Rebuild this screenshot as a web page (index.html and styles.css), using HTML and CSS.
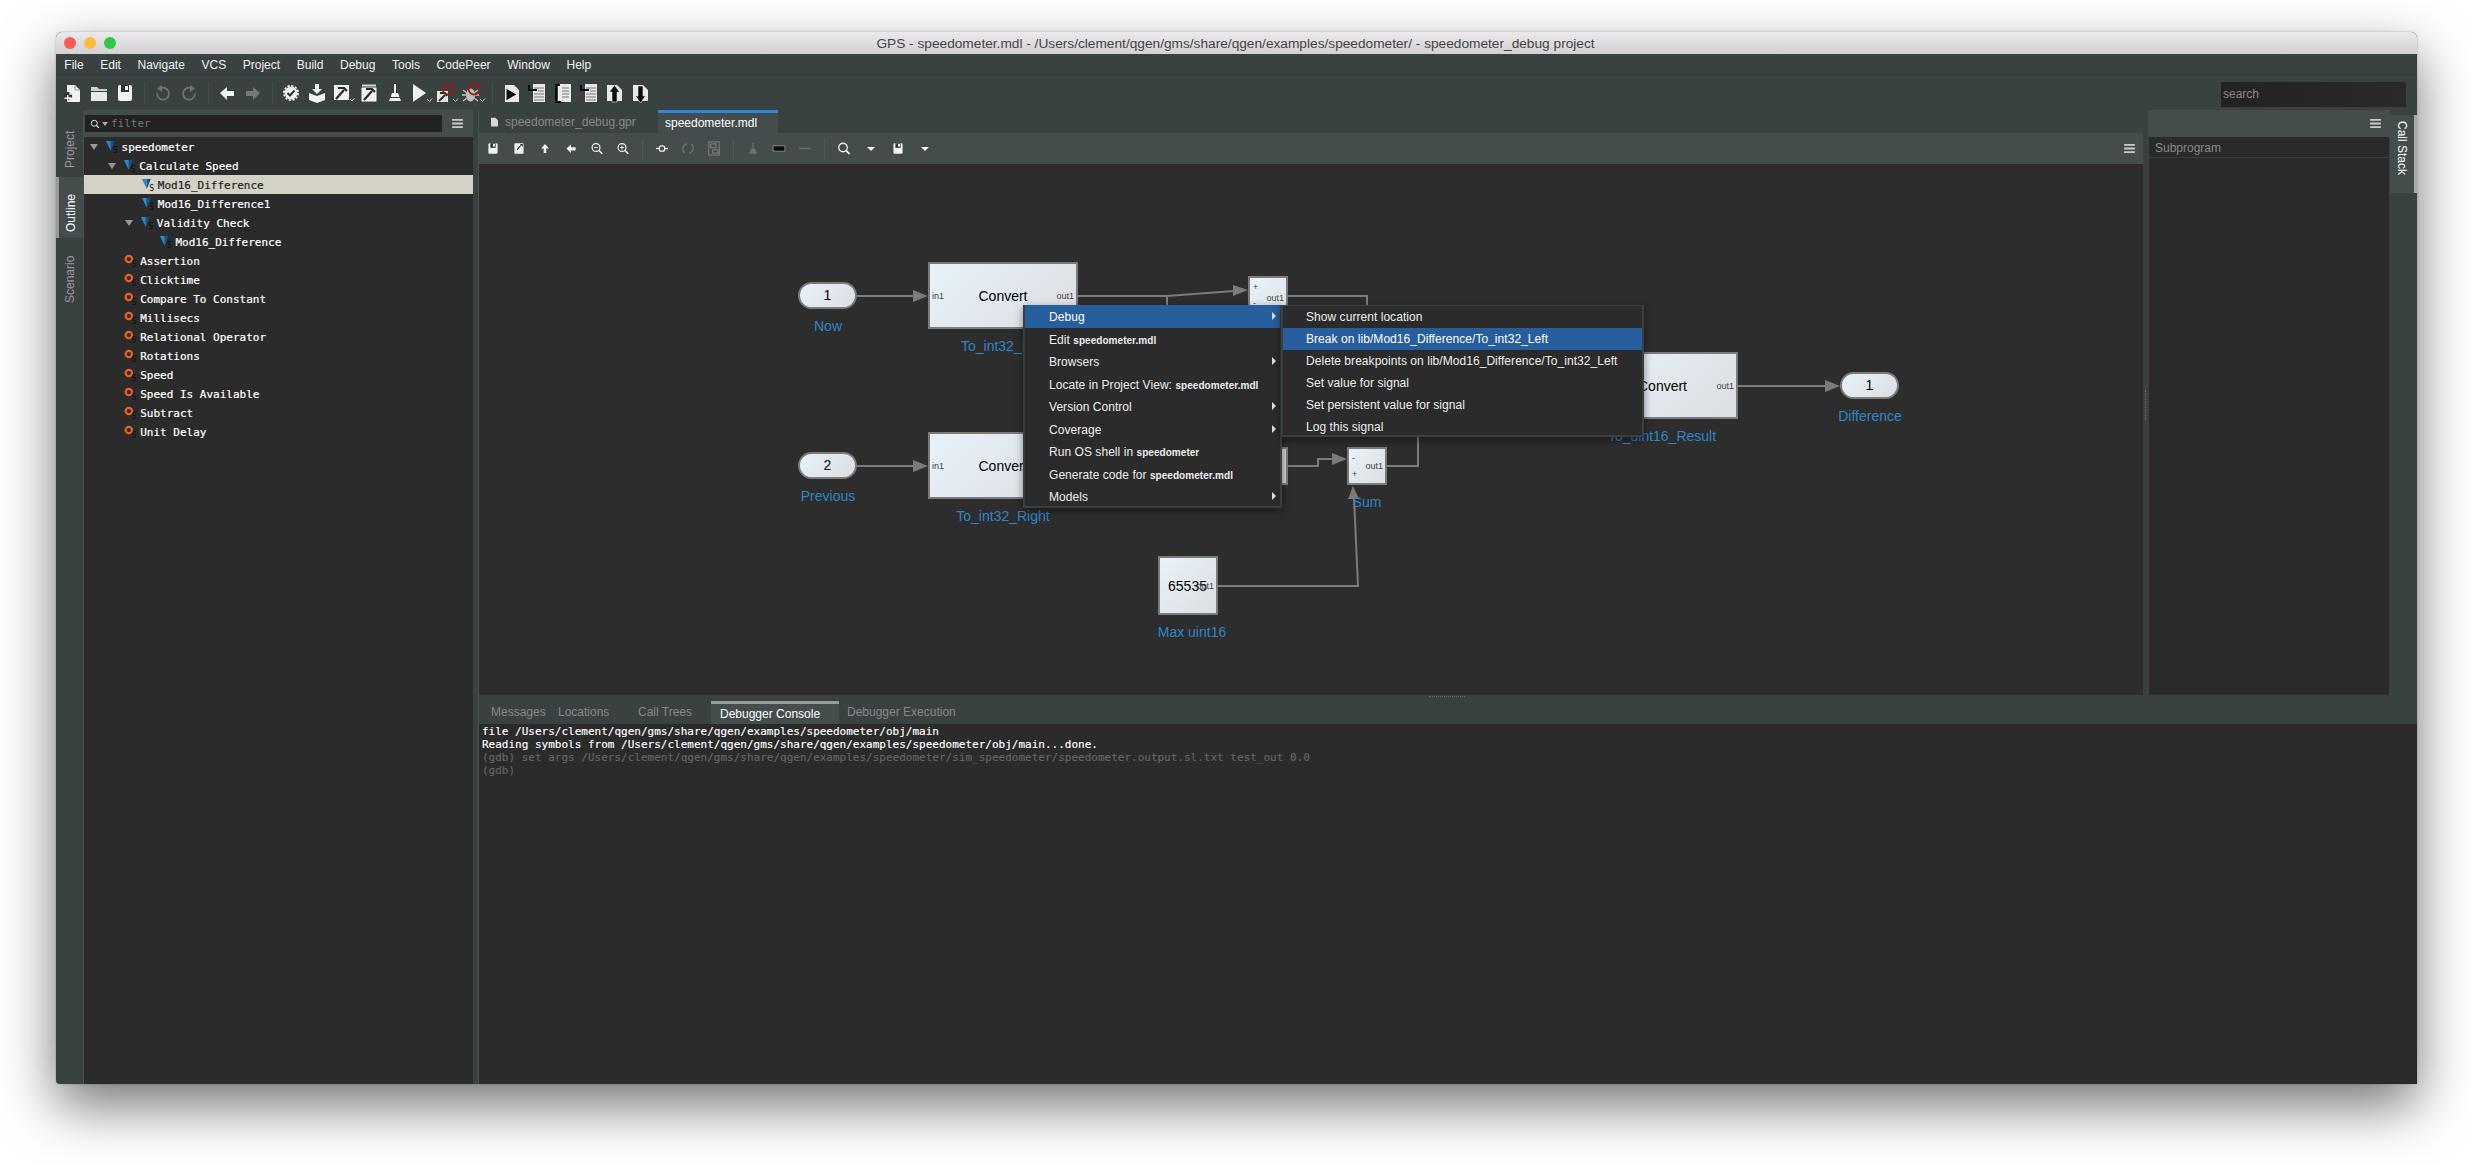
FILE: index.html
```html
<!DOCTYPE html>
<html lang="en">
<head>
  <meta charset="UTF-8">
  <title>GPS - speedometer.mdl</title>
  <link rel="stylesheet" href="styles.css">
</head>
<body>

  <!-- Icon set -->
  <svg class="defs" width="0" height="0">
    <symbol id="i-new" viewBox="0 0 26 26">
      <path d="M7 5h8l5 5v11a1 1 0 0 1-1 1H7z" fill="#f2f2f2"/>
      <path d="M15 5v5h5" fill="none" stroke="#9a9f9e"/>
      <path d="M8 14v3h3v3H8v3H5v-3H2v-3h3v-3z" fill="#2b2f2f" transform="translate(2 -1) scale(.92)"/>
      <path d="M7 15h1.500v2.500H11V19H8.500v2.500H7V19H4.500v-1.500H7z" fill="#fff"/>
    </symbol>
    <symbol id="i-open" viewBox="0 0 26 26">
      <path d="M5 7h6l2 2h8v2H5z" fill="#cfd1d0"/>
      <path d="M5 12h16v9H5z" fill="#e9e9e9"/>
    </symbol>
    <symbol id="i-save" viewBox="0 0 26 26">
      <rect x="6" y="5" width="14" height="16" rx="2" fill="#f2f2f2"/>
      <rect x="9" y="5" width="8" height="7" fill="#2f3535"/>
      <rect x="13" y="6" width="3" height="4" fill="#f2f2f2"/>
    </symbol>
    <symbol id="i-saveas" viewBox="0 0 26 26">
      <rect x="6" y="5" width="14" height="16" rx="1" fill="#f2f2f2"/>
      <path d="M10 15l6-7M15 7h3v3" fill="none" stroke="#2f3535" stroke-width="1.600"/>
    </symbol>
    <symbol id="i-undo" viewBox="0 0 26 26">
      <path d="M10 8.500a6 6 0 1 1-3 5" fill="none" stroke="#6d7473" stroke-width="1.800"/>
      <path d="M12 5v7l-5-3.500z" fill="#6d7473"/>
    </symbol>
    <symbol id="i-redo" viewBox="0 0 26 26">
      <path d="M16 8.500a6 6 0 1 0 3 5" fill="none" stroke="#6d7473" stroke-width="1.800"/>
      <path d="M14 5v7l5-3.500z" fill="#6d7473"/>
    </symbol>
    <symbol id="i-back" viewBox="0 0 26 26">
      <path d="M6 13l7-6v4h7v5h-7v4z" fill="#f2f2f2"/>
    </symbol>
    <symbol id="i-fwd" viewBox="0 0 26 26">
      <path d="M20 13l-7-6v4H6v5h7v4z" fill="#737a79"/>
    </symbol>
    <symbol id="i-up" viewBox="0 0 26 26">
      <path d="M13 6l6 7h-4v7h-4v-7H7z" fill="#f2f2f2"/>
    </symbol>
    <symbol id="i-check" viewBox="0 0 26 26">
      <circle cx="13" cy="13" r="6.500" fill="#f2f2f2"/>
      <circle cx="13" cy="13" r="7.200" fill="none" stroke="#f2f2f2" stroke-width="1.600" stroke-dasharray="2.300 1.470"/>
      <path d="M9.500 13l2.500 2.500 4.500-5" fill="none" stroke="#2f3535" stroke-width="2"/>
    </symbol>
    <symbol id="i-load" viewBox="0 0 26 26">
      <path d="M5 13l8 3 8-3v7l-8 3-8-3z" fill="#f2f2f2"/>
      <path d="M11 4h4v5h3l-5 5-5-5h3z" fill="#f2f2f2"/>
    </symbol>
    <symbol id="i-build" viewBox="0 0 26 26">
      <rect x="4" y="5" width="15" height="15" fill="#f2f2f2"/>
      <path d="M6 19l8-9M8 8h6l3 3" fill="none" stroke="#262a2a" stroke-width="2.200"/>
      <path d="M20 19l2 2 2.500-3" fill="none" stroke="#c4c8c7"/>
    </symbol>
    <symbol id="i-build2" viewBox="0 0 26 26">
      <rect x="6" y="4.500" width="14" height="2" fill="#d8d8d8"/>
      <rect x="5.500" y="7.500" width="15" height="14" fill="#f2f2f2"/>
      <path d="M8 20l8-9M10 9h6l3 3" fill="none" stroke="#262a2a" stroke-width="2.200"/>
    </symbol>
    <symbol id="i-broom" viewBox="0 0 26 26">
      <rect x="12" y="4" width="2" height="9" fill="#f2f2f2"/>
      <path d="M10 13h6l3 8H7z" fill="#f2f2f2"/>
      <path d="M7 17.500h12" stroke="#3a4241"/>
    </symbol>
    <symbol id="i-broom-off" viewBox="0 0 26 26">
      <rect x="12" y="5" width="2" height="8" fill="#6a7170"/>
      <path d="M10 13h6l3 8H7z" fill="#6a7170"/>
    </symbol>
    <symbol id="i-run" viewBox="0 0 26 26">
      <path d="M5 4l13 9-13 9z" fill="#f2f2f2"/>
      <path d="M19 19l2.500 2.500 2.500-3" fill="none" stroke="#c4c8c7"/>
    </symbol>
    <symbol id="i-buildred" viewBox="0 0 26 26">
      <rect x="3" y="11" width="11" height="11" fill="#e4e4e4"/>
      <path d="M5 21l6-6M6 13h5l2 3" fill="none" stroke="#262a2a" stroke-width="1.800"/>
      <circle cx="14" cy="9" r="5.500" fill="none" stroke="#a01818" stroke-width="1.800"/>
      <path d="M19 19l2.500 2.500 2.500-3" fill="none" stroke="#c4c8c7"/>
    </symbol>
    <symbol id="i-debug" viewBox="0 0 26 26">
      <ellipse cx="10.500" cy="15" rx="4.500" ry="6.500" fill="#bfc1c0"/>
      <path d="M3 10l4 3M2 15h4M3 21l4-3M18 10l-4 3M19 15h-4M18 21l-4-3" stroke="#bfc1c0" stroke-width="1.300"/>
      <circle cx="14" cy="9" r="5.500" fill="none" stroke="#a01818" stroke-width="1.800"/>
      <path d="M20 19l2.500 2.500 2.500-3" fill="none" stroke="#c4c8c7"/>
    </symbol>
    <symbol id="i-step" viewBox="0 0 26 26">
      <path d="M7 5h9l5 5v12H7z" fill="#e9e9e9"/>
      <path d="M8 8l11 6.500L8 21z" fill="#0b0b0b" stroke="#e9e9e9"/>
    </symbol>
    <symbol id="i-stepin" viewBox="0 0 26 26">
      <rect x="9" y="4" width="12" height="18" fill="#e9e9e9"/>
      <path d="M10 8h10M14 11h6M10 14h10M10 17h10M10 20h10" stroke="#777" stroke-width="1.100"/>
      <path d="M5 5v5h8" fill="none" stroke="#0b0b0b" stroke-width="2"/>
    </symbol>
    <symbol id="i-stepover" viewBox="0 0 26 26">
      <rect x="8" y="4" width="13" height="18" fill="#e9e9e9"/>
      <path d="M12 8h7M12 11h7M12 14h7M12 17h7" stroke="#777" stroke-width="1.100"/>
      <path d="M10 5H6v17h5" fill="none" stroke="#0b0b0b" stroke-width="2"/>
    </symbol>
    <symbol id="i-stepup" viewBox="0 0 26 26">
      <path d="M5 5h10l5 5v11H5z" fill="#e9e9e9"/>
      <path d="M12.500 5l5 7H15v10h-5V12H7.500z" fill="#0b0b0b" stroke="#e9e9e9" stroke-width=".6"/>
    </symbol>
    <symbol id="i-stepdown" viewBox="0 0 26 26">
      <path d="M5 5h10l5 5v11H5z" fill="#e9e9e9"/>
      <path d="M12.500 23l5-7H15V6h-5v10H7.500z" fill="#0b0b0b" stroke="#e9e9e9" stroke-width=".6"/>
    </symbol>
    <symbol id="i-zoomout" viewBox="0 0 26 26">
      <circle cx="11.500" cy="11.500" r="6" fill="none" stroke="#f2f2f2" stroke-width="1.800"/>
      <path d="M16 16l5 5" stroke="#f2f2f2" stroke-width="2.400"/>
      <path d="M8.500 11.500h6" stroke="#f2f2f2" stroke-width="1.400"/>
    </symbol>
    <symbol id="i-zoomin" viewBox="0 0 26 26">
      <circle cx="11.500" cy="11.500" r="6" fill="none" stroke="#f2f2f2" stroke-width="1.800"/>
      <path d="M16 16l5 5" stroke="#f2f2f2" stroke-width="2.400"/>
      <path d="M8.500 11.500h6M11.500 8.500v6" stroke="#f2f2f2" stroke-width="1.400"/>
    </symbol>
    <symbol id="i-search" viewBox="0 0 26 26">
      <circle cx="11.500" cy="11.500" r="6.500" fill="none" stroke="#f2f2f2" stroke-width="2"/>
      <path d="M16 16l5.500 5.500" stroke="#f2f2f2" stroke-width="2.600"/>
    </symbol>
    <symbol id="i-link" viewBox="0 0 26 26">
      <path d="M4 13h18" stroke="#f2f2f2" stroke-width="2"/>
      <rect x="9" y="9" width="8" height="8" rx="3" fill="#454d4c" stroke="#f2f2f2" stroke-width="2"/>
    </symbol>
    <symbol id="i-sync" viewBox="0 0 26 26">
      <path d="M8 20a8 8 0 0 1 3-14M18 6a8 8 0 0 1-3 14" fill="none" stroke="#6d7473" stroke-width="2"/>
    </symbol>
    <symbol id="i-layout" viewBox="0 0 26 26">
      <rect x="5" y="3" width="16" height="20" fill="none" stroke="#80868a" stroke-width="1.400"/>
      <rect x="8" y="6" width="8" height="6" fill="none" stroke="#80868a" stroke-width="1.400"/>
      <rect x="11" y="15" width="8" height="5" fill="none" stroke="#80868a" stroke-width="1.400"/>
    </symbol>
    <symbol id="i-rect" viewBox="0 0 26 26">
      <rect x="4" y="9" width="18" height="8" fill="#0c0c0c" stroke="#a8a8a8"/>
    </symbol>
    <symbol id="i-minus" viewBox="0 0 26 26">
      <rect x="4" y="12" width="18" height="2" fill="#666d6c"/>
    </symbol>
    <symbol id="i-caret" viewBox="0 0 26 26">
      <path d="M5 10h16l-8 8z" fill="#f2f2f2"/>
    </symbol>
    <symbol id="i-menu" viewBox="0 0 12 10">
      <path d="M0 0h12v2H0zM0 4h12v2H0zM0 8h12v2H0z" fill="#c9cccb"/>
    </symbol>
    <symbol id="i-diagram" viewBox="0 0 20 16">
      <path d="M4 2h5v10z" fill="#2f86c8"/>
      <path d="M9 2h4l-4 10z" fill="#174f86"/>
    </symbol>
    <symbol id="i-block" viewBox="0 0 20 16">
      <circle cx="8" cy="6" r="3.300" fill="none" stroke="#ee6020" stroke-width="2.200"/>
    </symbol>
  </svg>

  <div class="window">
    <div class="titlebar">
      <span class="light light-red"></span>
      <span class="light light-yellow"></span>
      <span class="light light-green"></span>
      <span class="title">GPS - speedometer.mdl - /Users/clement/qgen/gms/share/qgen/examples/speedometer/ - speedometer_debug project</span>
    </div>

    <div class="menubar">
      <span>File</span><span>Edit</span><span>Navigate</span><span>VCS</span><span>Project</span><span>Build</span>
      <span>Debug</span><span>Tools</span><span>CodePeer</span><span>Window</span><span>Help</span>
    </div>

    <div class="toolbar">
      <svg class="tool"><use href="#i-new"/></svg>
      <svg class="tool"><use href="#i-open"/></svg>
      <svg class="tool"><use href="#i-save"/></svg>
      <span class="sep"></span>
      <svg class="tool"><use href="#i-undo"/></svg>
      <svg class="tool"><use href="#i-redo"/></svg>
      <span class="sep"></span>
      <svg class="tool"><use href="#i-back"/></svg>
      <svg class="tool"><use href="#i-fwd"/></svg>
      <span class="sep"></span>
      <svg class="tool"><use href="#i-check"/></svg>
      <svg class="tool"><use href="#i-load"/></svg>
      <svg class="tool"><use href="#i-build"/></svg>
      <svg class="tool"><use href="#i-build2"/></svg>
      <svg class="tool"><use href="#i-broom"/></svg>
      <svg class="tool"><use href="#i-run"/></svg>
      <svg class="tool"><use href="#i-buildred"/></svg>
      <svg class="tool"><use href="#i-debug"/></svg>
      <span class="sep"></span>
      <svg class="tool"><use href="#i-step"/></svg>
      <svg class="tool"><use href="#i-stepin"/></svg>
      <svg class="tool"><use href="#i-stepover"/></svg>
      <svg class="tool"><use href="#i-stepin"/></svg>
      <svg class="tool"><use href="#i-stepup"/></svg>
      <svg class="tool"><use href="#i-stepdown"/></svg>
      <div class="search">search</div>
    </div>

    <div class="workspace">
      <!-- Left vertical tabs -->
      <div class="side-tabs">
        <div class="vtab vtab-project">Project</div>
        <div class="vtab vtab-active">Outline</div>
        <div class="vtab vtab-scenario">Scenario</div>
      </div>

      <!-- Outline -->
      <div class="outline">
        <div class="panel-head">
          <div class="filter">
            <svg class="filter-glass" viewBox="0 0 26 26"><use href="#i-search"/></svg>
            <span class="filter-caret"></span>
            <span>filter</span>
          </div>
          <svg class="burger"><use href="#i-menu"/></svg>
        </div>
        <div class="tree">
          <div class="row lv0"><span class="twist"></span><span class="ico"><svg><use href="#i-diagram"/></svg></span>speedometer</div>
          <div class="row lv1"><span class="twist"></span><span class="ico"><svg><use href="#i-diagram"/></svg></span>Calculate Speed</div>
          <div class="row lv2 row-selected"><span class="twist-none"></span><span class="ico"><svg><use href="#i-diagram"/></svg></span>Mod16_Difference</div>
          <div class="row lv2"><span class="twist-none"></span><span class="ico"><svg><use href="#i-diagram"/></svg></span>Mod16_Difference1</div>
          <div class="row lv2"><span class="twist"></span><span class="ico"><svg><use href="#i-diagram"/></svg></span>Validity Check</div>
          <div class="row lv3"><span class="twist-none"></span><span class="ico"><svg><use href="#i-diagram"/></svg></span>Mod16_Difference</div>
          <div class="row lv1"><span class="twist-none"></span><span class="ico"><svg><use href="#i-block"/></svg></span>Assertion</div>
          <div class="row lv1"><span class="twist-none"></span><span class="ico"><svg><use href="#i-block"/></svg></span>Clicktime</div>
          <div class="row lv1"><span class="twist-none"></span><span class="ico"><svg><use href="#i-block"/></svg></span>Compare To Constant</div>
          <div class="row lv1"><span class="twist-none"></span><span class="ico"><svg><use href="#i-block"/></svg></span>Millisecs</div>
          <div class="row lv1"><span class="twist-none"></span><span class="ico"><svg><use href="#i-block"/></svg></span>Relational Operator</div>
          <div class="row lv1"><span class="twist-none"></span><span class="ico"><svg><use href="#i-block"/></svg></span>Rotations</div>
          <div class="row lv1"><span class="twist-none"></span><span class="ico"><svg><use href="#i-block"/></svg></span>Speed</div>
          <div class="row lv1"><span class="twist-none"></span><span class="ico"><svg><use href="#i-block"/></svg></span>Speed Is Available</div>
          <div class="row lv1"><span class="twist-none"></span><span class="ico"><svg><use href="#i-block"/></svg></span>Subtract</div>
          <div class="row lv1"><span class="twist-none"></span><span class="ico"><svg><use href="#i-block"/></svg></span>Unit Delay</div>
        </div>
      </div>

      <div class="main">
        <div class="upper">
          <!-- Editor -->
          <div class="editor">
            <div class="editor-tabs">
              <div class="etab">
                <svg class="file-ico" viewBox="0 0 8 10"><path d="M0 0h5l3 3v7H0z" fill="#d6d6d6"/></svg>
                speedometer_debug.gpr
              </div>
              <div class="etab etab-active">speedometer.mdl</div>
            </div>
            <div class="editor-bar">
              <svg class="etool"><use href="#i-save"/></svg>
              <svg class="etool"><use href="#i-saveas"/></svg>
              <svg class="etool"><use href="#i-up"/></svg>
              <svg class="etool"><use href="#i-back"/></svg>
              <svg class="etool"><use href="#i-zoomout"/></svg>
              <svg class="etool"><use href="#i-zoomin"/></svg>
              <span class="esep"></span>
              <svg class="etool"><use href="#i-link"/></svg>
              <svg class="etool"><use href="#i-sync"/></svg>
              <svg class="etool"><use href="#i-layout"/></svg>
              <span class="esep"></span>
              <svg class="etool"><use href="#i-broom-off"/></svg>
              <svg class="etool"><use href="#i-rect"/></svg>
              <svg class="etool"><use href="#i-minus"/></svg>
              <span class="esep"></span>
              <svg class="etool"><use href="#i-search"/></svg>
              <svg class="etool etool-caret"><use href="#i-caret"/></svg>
              <svg class="etool"><use href="#i-save"/></svg>
              <svg class="etool etool-caret"><use href="#i-caret"/></svg>
              <svg class="burger burger-end"><use href="#i-menu"/></svg>
            </div>

            <!-- Diagram canvas -->
            <div class="canvas">
              <svg class="wires">
                <g transform="translate(-479 -164)">
                  <path class="wire" d="M857 296H914M857 466H914M1078 296H1167L1234 291M1167 296V312M1288 296H1367V312M1288 466H1318V459H1333M1387 466H1418V430M1217 586H1358L1354 498M1738 386H1826"/>
                  <path class="tip" d="M913 290L928 296L913 302zM913 460L928 466L913 472zM1233 285L1248 290L1233 296zM1332 453L1347 459L1332 465zM1353 486L1348 499L1359 499zM1825 380L1840 386L1825 392z"/>
                </g>
              </svg>

              <div class="port port-now">1</div>
              <div class="label label-now">Now</div>
              <div class="port port-prev">2</div>
              <div class="label label-prev">Previous</div>
              <div class="port port-diff">1</div>
              <div class="label label-diff">Difference</div>

              <div class="block block-left"><span class="pin-in">in1</span>Convert<span class="pin-out">out1</span></div>
              <div class="label label-left">To_int32_Left</div>
              <div class="block block-right"><span class="pin-in">in1</span>Convert</div>
              <div class="label label-right">To_int32_Right</div>
              <div class="block block-result">Convert<span class="pin-out">out1</span></div>
              <div class="label label-result">To_uint16_Result</div>

              <div class="block block-add"><span class="sign sign-top">+</span><span class="sign sign-low">-</span><span class="pin-out">out1</span></div>
              <div class="block block-strip"></div>
              <div class="block block-sum"><span class="sign sign-top">-</span><span class="sign sign-low">+</span><span class="pin-out">out1</span></div>
              <div class="label label-sum">Sum</div>
              <div class="block block-const">65535<span class="pin-out">out1</span></div>
              <div class="label label-const">Max uint16</div>

              <!-- Context menu -->
              <div class="menu menu-main">
                <div class="item item-active item-more">Debug</div>
                <div class="item">Edit <b>speedometer.mdl</b></div>
                <div class="item item-more">Browsers</div>
                <div class="item">Locate in Project View: <b>speedometer.mdl</b></div>
                <div class="item item-more">Version Control</div>
                <div class="item item-more">Coverage</div>
                <div class="item">Run OS shell in <b>speedometer</b></div>
                <div class="item">Generate code for <b>speedometer.mdl</b></div>
                <div class="item item-more">Models</div>
              </div>
              <div class="menu menu-sub">
                <div class="item">Show current location</div>
                <div class="item item-active">Break on lib/Mod16_Difference/To_int32_Left</div>
                <div class="item">Delete breakpoints on lib/Mod16_Difference/To_int32_Left</div>
                <div class="item">Set value for signal</div>
                <div class="item">Set persistent value for signal</div>
                <div class="item">Log this signal</div>
              </div>
            </div>
          </div>

          <!-- Call stack -->
          <div class="stack">
            <div class="panel-head panel-head-end">
              <svg class="burger"><use href="#i-menu"/></svg>
            </div>
            <div class="stack-table">
              <div class="stack-col">Subprogram</div>
            </div>
          </div>
          <div class="side-tabs-right">
            <div class="vtab-right">Call Stack</div>
          </div>
          <span class="grip-v"></span>
        </div>

        <!-- Bottom panel -->
        <div class="lower">
          <span class="grip-h"></span>
          <div class="lower-tabs">
            <div class="ltab ltab-messages">Messages</div>
            <div class="ltab ltab-locations">Locations</div>
            <div class="ltab ltab-trees">Call Trees</div>
            <div class="ltab ltab-active">Debugger Console</div>
            <div class="ltab ltab-exec">Debugger Execution</div>
          </div>
          <div class="console">
            <div>file /Users/clement/qgen/gms/share/qgen/examples/speedometer/obj/main</div>
            <div>Reading symbols from /Users/clement/qgen/gms/share/qgen/examples/speedometer/obj/main...done.</div>
            <div class="dim">(gdb) set args /Users/clement/qgen/gms/share/qgen/examples/speedometer/sim_speedometer/speedometer.output.sl.txt test_out 0.0</div>
            <div class="dim">(gdb)</div>
          </div>
        </div>
      </div>
    </div>
  </div>

</body>
</html>
```

FILE: styles.css
```css
html, body {
  height: 100%;
}

body {
  margin: 0;
  overflow: hidden;
  background: #fff;
  font-family: "Liberation Sans", Arial, sans-serif;
  font-size: 12px;
}

.defs {
  position: absolute;
}

.window {
  box-sizing: border-box;
  display: flex;
  flex-direction: column;
  width: 2361px;
  height: 1052px;
  margin: 32px 0 0 56px;
  border-radius: 6px 6px 4px 4px;
  background: #3a4241;
  box-shadow: 0 22px 55px rgba(0,0,0,0.55), 0 0 2px rgba(0,0,0,0.3);
}

/* Title bar */
.titlebar {
  display: flex;
  align-items: center;
  gap: 8px;
  flex: none;
  height: 22px;
  padding-left: 8px;
  border-radius: 6px 6px 0 0;
  background: linear-gradient(to bottom, #ebe9eb, #d2d0d2);
}

.light {
  width: 12px;
  height: 12px;
  border-radius: 50%;
}

.light-red { background: #fc5b57; }
.light-yellow { background: #fdbc40; }
.light-green { background: #33c748; }

.title {
  flex: 1;
  margin-right: 70px;
  text-align: center;
  font-size: 13.700px;
  color: #444;
}

/* Menu bar */
.menubar {
  display: flex;
  flex: none;
  align-items: center;
  height: 21px;
  padding-top: 1px;
  border-bottom: 1px solid #363d3c;
  box-sizing: border-box;
  color: #f0f0f0;
}

.menubar span {
  padding: 0 8.300px;
}

/* Main toolbar */
.toolbar {
  display: flex;
  flex: none;
  align-items: center;
  height: 35px;
  padding-left: 4px;
}

.tool {
  width: 26px;
  height: 26px;
  flex: none;
}

.sep {
  width: 1px;
  height: 22px;
  margin: 0 5px 0 6px;
  background: #454d4c;
}

.search {
  box-sizing: border-box;
  width: 185px;
  height: 25px;
  margin: 4px 11px 0 auto;
  padding-left: 2px;
  line-height: 25px;
  background: linear-gradient(to right, #222, #2a2a2a);
  color: #888;
}

/* Workspace */
.workspace {
  display: flex;
  flex: 1;
  min-height: 0;
}

.side-tabs {
  flex: none;
  width: 27px;
  border-right: 1px solid #4a5250;
  color: #999;
}

.vtab {
  writing-mode: vertical-rl;
  transform: rotate(180deg);
  text-align: left;
  line-height: 28px;
}

.vtab-project {
  height: 67px;
  padding-top: 9px;
  box-sizing: border-box;
}

.vtab-active {
  box-sizing: border-box;
  height: 61px;
  padding-top: 6px;
  background: #454d4c;
  border-right: 3px solid #999;
  line-height: 24px;
  color: #fff;
}

.vtab-scenario {
  box-sizing: border-box;
  height: 65px;
}

/* Outline panel */
.outline {
  display: flex;
  flex-direction: column;
  flex: none;
  width: 389px;
}

.panel-head {
  display: flex;
  align-items: center;
  flex: none;
  height: 27px;
  background: #454d4c;
}

.filter {
  display: flex;
  align-items: center;
  box-sizing: border-box;
  width: 357px;
  height: 17px;
  margin-left: 1px;
  margin-right: 10px;
  padding-left: 4px;
  background: #222;
  color: #777;
  font-family: "DejaVu Sans Mono", monospace;
  font-size: 11px;
}

.filter-glass {
  width: 12px;
  height: 12px;
}

.filter-caret {
  width: 0;
  height: 0;
  margin: 1px 3px 0 1px;
  border: 3px solid transparent;
  border-top: 4px solid #aaa;
  border-bottom: 0;
}

.burger {
  width: 11px;
  height: 9px;
  flex: none;
}

.tree {
  flex: 1;
  background: #2b2b2b;
  color: #fff;
  font-family: "DejaVu Sans Mono", monospace;
  font-size: 11px;
  -webkit-text-stroke: 0.2px;
}

.row {
  display: flex;
  align-items: center;
  box-sizing: border-box;
  height: 19px;
  padding-top: 1px;
  white-space: pre;
}

.lv0 { padding-left: 2px; }
.lv1 { padding-left: 19.6px; }
.lv2 { padding-left: 37.2px; }
.lv3 { padding-left: 54.8px; }

.row-selected {
  background: #d4d1c7;
  color: #222;
}

.twist, .twist-none {
  display: block;
  flex: none;
  width: 17px;
  height: 8px;
}

.twist {
  box-sizing: border-box;
  width: 0;
  height: 0;
  margin: 0 4px 0 4px;
  border: 4.500px solid transparent;
  border-top: 6px solid #999;
  border-bottom: 0;
}

.ico {
  position: relative;
  flex: none;
  width: 19.600px;
  height: 16px;
}

.ico svg {
  display: block;
  width: 100%;
  height: 100%;
}

/* small S badge on the tree icons */
.ico::after {
  content: "S";
  position: absolute;
  left: 11px;
  top: 7px;
  font-size: 8px;
  line-height: 9px;
  color: #0c0c0c;
  -webkit-text-stroke: 0;
}

/* Centre and right */
.main {
  display: flex;
  flex-direction: column;
  flex: 1;
  min-width: 0;
  margin-left: 5px;
  border-left: 1px solid #4a5250;
}

.upper {
  position: relative;
  display: flex;
  flex: none;
  height: 585px;
}

.editor {
  display: flex;
  flex-direction: column;
  flex: none;
  width: 1664px;
  margin-right: 5px;
}

.editor-tabs {
  display: flex;
  flex: none;
  height: 23px;
  color: #888;
}

.etab {
  display: flex;
  align-items: center;
  gap: 7px;
  box-sizing: border-box;
  width: 179px;
  padding-left: 12px;
}

.file-ico {
  width: 7px;
  height: 10px;
}

.etab-active {
  width: 120px;
  padding-left: 7px;
  border-top: 3px solid #2f86d8;
  background: #454d4c;
  color: #fff;
}

.editor-bar {
  display: flex;
  flex: none;
  align-items: center;
  height: 31px;
  padding-left: 1px;
  background: #454d4c;
}

.etool {
  width: 26px;
  height: 17px;
  flex: none;
}

.etool-caret {
  width: 28px;
  height: 13px;
}

.esep {
  width: 1px;
  height: 22px;
  margin: 0 6px;
  background: #515958;
}

.burger-end {
  margin-left: auto;
  margin-right: 8px;
}

/* Diagram */
.canvas {
  position: relative;
  flex: 1;
  overflow: hidden;
  background: #2d2d2d;
}

.wires {
  position: absolute;
  left: 0;
  top: 0;
  width: 100%;
  height: 100%;
}

.wire {
  fill: none;
  stroke: #7b7b7b;
  stroke-width: 2;
}

.tip {
  fill: #7b7b7b;
}

.port, .block {
  position: absolute;
  box-sizing: border-box;
  border: 2px solid #7b7b7b;
  background: linear-gradient(135deg, #e7f2f9, #dcdee2);
  color: #000;
  font-size: 14px;
}

.port {
  width: 59px;
  height: 27px;
  border-radius: 14px;
  text-align: center;
  line-height: 23px;
}

.port-now { left: 319px; top: 118px; }
.port-prev { left: 319px; top: 288px; }
.port-diff { left: 1361px; top: 208px; }

.block {
  display: flex;
  align-items: center;
  justify-content: center;
}

.block-left { left: 449px; top: 98px; width: 150px; height: 67px; }
.block-right { left: 449px; top: 268px; width: 150px; height: 67px; }
.block-result { left: 1108px; top: 188px; width: 151px; height: 67px; }
.block-add { left: 769px; top: 112px; width: 40px; height: 60px; align-items: flex-start; }
.block-strip { left: 761px; top: 283px; width: 48px; height: 38px; background: #d0d1d3; }
.block-sum { left: 868px; top: 283px; width: 40px; height: 38px; }
.block-const { left: 679px; top: 392px; width: 60px; height: 59px; padding-right: 1px; }

.pin-in, .pin-out {
  position: absolute;
  top: 50%;
  margin-top: -6px;
  font-size: 9px;
  line-height: 12px;
  color: #444;
}

.pin-in { left: 2px; }
.pin-out { right: 2px; }

.block-add .pin-out {
  top: 14px;
  margin-top: 0;
}

.sign {
  position: absolute;
  left: 3px;
  font-size: 9px;
  line-height: 10px;
  color: #444;
}

.sign-top { top: 4px; }
.sign-low { top: 20px; }

.label {
  position: absolute;
  width: 200px;
  height: 18px;
  margin-left: -100px;
  margin-top: -9px;
  text-align: center;
  line-height: 18px;
  font-size: 14px;
  color: #2f86c8;
}

.label-now { left: 349px; top: 162px; }
.label-prev { left: 349px; top: 332px; }
.label-diff { left: 1391px; top: 252px; }
.label-left { left: 524px; top: 182px; }
.label-right { left: 524px; top: 352px; }
.label-result { left: 1183px; top: 272px; }
.label-sum { left: 888px; top: 338px; }
.label-const { left: 713px; top: 468px; }

/* Context menus */
.menu {
  position: absolute;
  box-sizing: border-box;
  background: #2b2b2b;
  border: 2px solid #39413f;
  border-top-width: 0;
  color: #eee;
  letter-spacing: 0.05px;
  box-shadow: 0 3px 8px rgba(0,0,0,0.45);
}

.menu b {
  font-size: 10px;
}

.menu-main {
  left: 544px;
  top: 141px;
  width: 259px;
  height: 203px;
}

.menu-sub {
  left: 802px;
  top: 141px;
  width: 363px;
  height: 132px;
  border-top-width: 1px;
}

.item {
  position: relative;
  box-sizing: border-box;
  height: 22px;
  padding-left: 23px;
  line-height: 23px;
  white-space: nowrap;
}

.menu-main .item {
  height: 22.500px;
  padding-left: 24px;
  line-height: 24px;
}

.item-active {
  background: #275e9e;
  color: #fff;
}

.item-more::after {
  content: "";
  position: absolute;
  right: 4px;
  top: 7px;
  border: 4px solid transparent;
  border-left: 4px solid #ddd;
  border-right: 0;
}

/* Call stack panel */
.stack {
  display: flex;
  flex-direction: column;
  flex: none;
  width: 242px;
}

.panel-head-end {
  justify-content: flex-end;
  padding-right: 9px;
}

.stack-table {
  flex: 1;
  margin: 0 1px;
  background: #2a2a2a;
}

.stack-col {
  box-sizing: border-box;
  height: 21px;
  padding-left: 6px;
  line-height: 22px;
  border-bottom: 1px solid #3d3d3d;
  color: #888;
}

.side-tabs-right {
  flex: none;
  width: 27px;
  padding-top: 5px;
}

.vtab-right {
  box-sizing: border-box;
  height: 78px;
  padding-top: 6px;
  writing-mode: vertical-rl;
  line-height: 24px;
  background: #454d4c;
  border-right: 3px solid #aaa;
  color: #fff;
}

/* Splitter handles */
.grip-v {
  position: absolute;
  left: 1666px;
  top: 280px;
  height: 30px;
  border-left: 1px dotted #666;
}

.grip-h {
  position: absolute;
  left: 950px;
  top: 1px;
  width: 36px;
  border-top: 1px dotted #666;
}

/* Bottom panel */
.lower {
  position: relative;
  display: flex;
  flex-direction: column;
  flex: 1;
  min-height: 0;
}

.lower-tabs {
  display: flex;
  flex: none;
  align-items: flex-end;
  height: 29px;
  color: #888;
}

.ltab {
  box-sizing: border-box;
  height: 23px;
  line-height: 23px;
}

.ltab-messages { width: 79px; padding-left: 12px; }
.ltab-locations { width: 80px; }
.ltab-trees { width: 73px; }

.ltab-active {
  width: 128px;
  padding-left: 9px;
  border-top: 3px solid #999;
  background: #454d4c;
  line-height: 20px;
  color: #fff;
}

.ltab-exec {
  padding-left: 8px;
}

.console {
  flex: 1;
  padding: 1px 0 0 3px;
  background: #2b2b2b;
  color: #fff;
  font-family: "DejaVu Sans Mono", monospace;
  font-size: 11px;
  line-height: 13px;
  -webkit-text-stroke: 0.15px;
}

.dim {
  color: #666;
}
```
